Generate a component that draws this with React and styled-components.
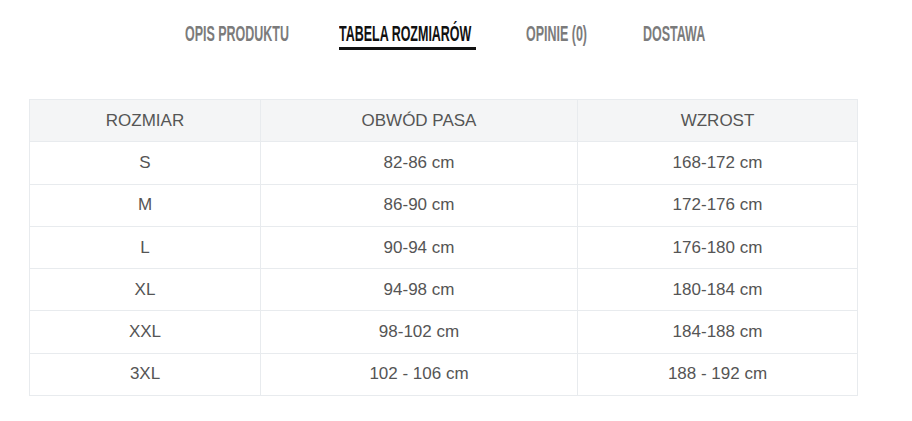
import styled, { createGlobalStyle } from "styled-components";

const Global = createGlobalStyle`
body{
    margin: 0;
    background: #fff;
    font-family: "Liberation Sans", Arial, sans-serif;
}
`

const Wrap = styled.div`
width: 829px;
margin-left: 29px;
`

const Tabs = styled.ul`
list-style: none;
margin: 0;
padding: 20px 0 0 5px;
display: flex;
justify-content: center;
gap: 50px;
height: 99px;
box-sizing: border-box;
`

const Tab = styled.li`
width: ${p => p.w}px;
height: 30px;
box-sizing: border-box;
border-bottom: 3px solid ${p => p.active ? "#111" : "transparent"};
white-space: nowrap;

span{
    display: inline-block;
    font-weight: 700;
    font-size: 22px;
    line-height: 27px;
    color: ${p => p.active ? "#111" : "#7b7b7b"};
    transform: scaleX(0.567);
    transform-origin: left top;
}
`

const Table = styled.table`
width: 829px;
border-collapse: collapse;
border: 1px solid #e8ebee;
color: #555;
font-size: 17px;

th, td{
    border: 1px solid #e8ebee;
    text-align: center;
    font-weight: 400;
    height: 41.3px;
    padding: 0;
}
th{
    background: #f4f5f6;
}
`

const rows = [
    ["S", "82-86 cm", "168-172 cm"],
    ["M", "86-90 cm", "172-176 cm"],
    ["L", "90-94 cm", "176-180 cm"],
    ["XL", "94-98 cm", "180-184 cm"],
    ["XXL", "98-102 cm", "184-188 cm"],
    ["3XL", "102 - 106 cm", "188 - 192 cm"],
]

const tabs = [
    {label: "OPIS PRODUKTU", w: 104},
    {label: "TABELA ROZMIARÓW", w: 137},
    {label: "OPINIE (0)", w: 67},
    {label: "DOSTAWA", w: 64},
]

export default function App(){
    return(
        <Wrap>
            <Global/>
            <Tabs>
                {tabs.map((t, i) => <Tab key={t.label} w={t.w} active={i === 1}><span>{t.label}</span></Tab>)}
            </Tabs>
            <Table>
                <colgroup>
                    <col style={{width: 231}}/>
                    <col style={{width: 317}}/>
                    <col/>
                </colgroup>
                <thead>
                    <tr><th>ROZMIAR</th><th>OBWÓD PASA</th><th>WZROST</th></tr>
                </thead>
                <tbody>
                    {rows.map(r => (
                        <tr key={r[0]}>{r.map((c, j) => <td key={j}>{c}</td>)}</tr>
                    ))}
                </tbody>
            </Table>
        </Wrap>
    )
}
